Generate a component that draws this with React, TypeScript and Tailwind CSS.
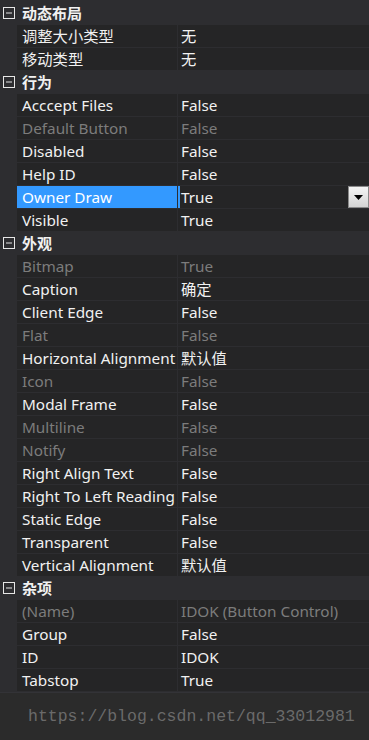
type Prop = { name: string; value: string; dim?: boolean; selected?: boolean };
type Group = { title: string; items: Prop[] };

const groups: Group[] = [
  {
    title: '动态布局',
    items: [
      { name: '调整大小类型', value: '无' },
      { name: '移动类型', value: '无' },
    ],
  },
  {
    title: '行为',
    items: [
      { name: 'Acccept Files', value: 'False' },
      { name: 'Default Button', value: 'False', dim: true },
      { name: 'Disabled', value: 'False' },
      { name: 'Help ID', value: 'False' },
      { name: 'Owner Draw', value: 'True', selected: true },
      { name: 'Visible', value: 'True' },
    ],
  },
  {
    title: '外观',
    items: [
      { name: 'Bitmap', value: 'True', dim: true },
      { name: 'Caption', value: '确定' },
      { name: 'Client Edge', value: 'False' },
      { name: 'Flat', value: 'False', dim: true },
      { name: 'Horizontal Alignment', value: '默认值' },
      { name: 'Icon', value: 'False', dim: true },
      { name: 'Modal Frame', value: 'False' },
      { name: 'Multiline', value: 'False', dim: true },
      { name: 'Notify', value: 'False', dim: true },
      { name: 'Right Align Text', value: 'False' },
      { name: 'Right To Left Reading', value: 'False' },
      { name: 'Static Edge', value: 'False' },
      { name: 'Transparent', value: 'False' },
      { name: 'Vertical Alignment', value: '默认值' },
    ],
  },
  {
    title: '杂项',
    items: [
      { name: '(Name)', value: 'IDOK (Button Control)', dim: true },
      { name: 'Group', value: 'False' },
      { name: 'ID', value: 'IDOK' },
      { name: 'Tabstop', value: 'True' },
    ],
  },
];

function CollapseIcon() {
  return (
    <svg width="12" height="12" viewBox="0 0 12 12" className="shrink-0">
      <rect x="0.5" y="0.5" width="11" height="11" fill="none" stroke="#e6e6e6" strokeWidth="1" />
      <line x1="3" y1="6" x2="9" y2="6" stroke="#e6e6e6" strokeWidth="1" />
    </svg>
  );
}

function DropButton() {
  return (
    <div className="flex h-[22px] w-[21px] shrink-0 items-center justify-center border border-[#8a8a8a] bg-gradient-to-b from-[#f4f4f4] to-[#d4d4d4]">
      <svg width="9" height="5" viewBox="0 0 9 5">
        <polygon points="0,0 9,0 4.5,5" fill="#000" />
      </svg>
    </div>
  );
}

export default function App() {
  return (
    <div
      className="flex h-[740px] w-[369px] flex-col overflow-hidden bg-[#2d2d30] text-[15.3px] leading-[22px] text-[#f1f1f1]"
      style={{ fontFamily: '"Noto Sans", "Noto Sans CJK SC", sans-serif' }}
    >
      <div className="flex flex-col gap-px pt-[2px]">
        {groups.map((g) => (
          <div key={g.title} className="flex flex-col gap-px">
            <div className="flex h-[22px] items-center">
              <div className="flex w-[17px] justify-center pl-[1px]">
                <CollapseIcon />
              </div>
              <span className="pl-[5px] text-[15px] font-bold">{g.title}</span>
            </div>
            {g.items.map((p) => (
              <div key={p.name} className="flex h-[22px]">
                <div className="w-[17px] shrink-0" />
                <div
                  className={
                    p.selected
                      ? 'w-[160px] shrink-0 overflow-hidden whitespace-nowrap bg-[#3399ff] pl-[5px] text-white'
                      : p.dim
                        ? 'w-[160px] shrink-0 overflow-hidden whitespace-nowrap bg-[#252526] pl-[5px] text-[#7c7c7c]'
                        : 'w-[160px] shrink-0 overflow-hidden whitespace-nowrap bg-[#252526] pl-[5px]'
                  }
                >
                  {p.name}
                </div>
                <div
                  className={
                    p.selected
                      ? 'ml-px flex flex-1 items-center justify-between border-l-2 border-[#3399ff] bg-[#252526] pl-[1px]'
                      : 'ml-px flex flex-1 items-center bg-[#252526] pl-[3px]'
                  }
                >
                  <span className={p.dim ? 'whitespace-nowrap text-[#7c7c7c]' : 'whitespace-nowrap'}>{p.value}</span>
                  {p.selected && <DropButton />}
                </div>
              </div>
            ))}
          </div>
        ))}
      </div>
      <div className="mt-px flex flex-1 items-center border-t border-[#333337] bg-[#2b2b2b] pl-[28px]">
        <span
          className="text-[16.5px] text-[#6a6a6a]"
          style={{ fontFamily: '"Liberation Mono", monospace' }}
        >
          https://blog.csdn.net/qq_33012981
        </span>
      </div>
    </div>
  );
}
